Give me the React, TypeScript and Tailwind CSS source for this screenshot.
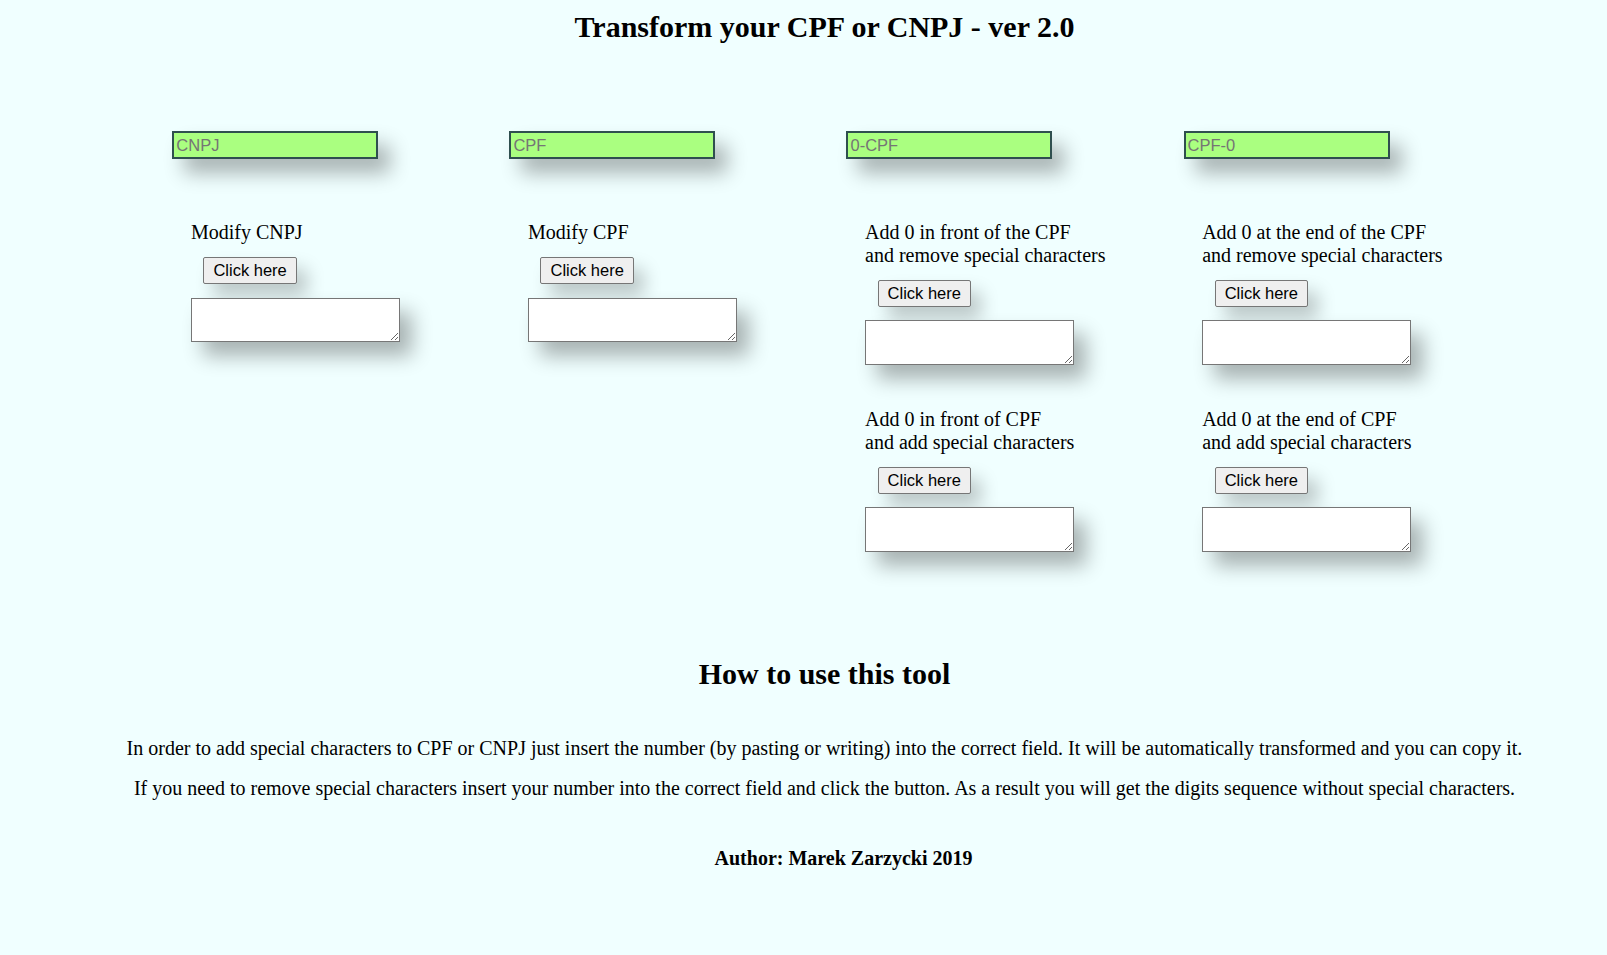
import React from "react";

const groups: { placeholder: string; blocks: string[][] }[] = [
  { placeholder: "CNPJ", blocks: [["Modify CNPJ"]] },
  { placeholder: "CPF", blocks: [["Modify CPF"]] },
  {
    placeholder: "0-CPF",
    blocks: [
      ["Add 0 in front of the CPF", "and remove special characters"],
      ["Add 0 in front of CPF", "and add special characters"],
    ],
  },
  {
    placeholder: "CPF-0",
    blocks: [
      ["Add 0 at the end of the CPF", "and remove special characters"],
      ["Add 0 at the end of CPF", "and add special characters"],
    ],
  },
];

const Block = ({ lines }: { lines: string[] }) => (
  <div className="flex flex-col items-start">
    <p className="text-[20px] leading-[22.5px] text-black">
      {lines.map((l, i) => (
        <span key={i} className="block">
          {l}
        </span>
      ))}
    </p>
    <button className="mt-[13.5px] ml-[12.5px] h-[27px] px-[9px] bg-[#efefef] border border-[#767676] rounded-[2px] font-['Liberation_Sans',sans-serif] text-[16.5px] leading-[19px] text-black shadow-[10px_12px_18px_rgba(0,0,0,0.22)]">
      Click here
    </button>
    <textarea className="mt-[13.3px] w-[209px] h-[44.7px] bg-white border border-[#767676] p-[2px] shadow-[12px_14px_20px_rgba(0,0,0,0.3)]" />
  </div>
);

export default function App() {
  return (
    <div className="min-h-screen pt-[10px] bg-[#f0ffff] font-['Liberation_Serif',serif] text-black">
      <h1 className="pl-[42px] text-center text-[30px] leading-[34px] font-bold">
        Transform your CPF or CNPJ - ver 2.0
      </h1>

      {/* converters */}
      <div className="mt-[87px] pl-[172.3px] flex">
        {groups.map((g) => (
          <div key={g.placeholder} className="w-[337.1px] flex flex-col items-start">
            <input
              placeholder={g.placeholder}
              className="w-[206px] h-[28px] bg-[#aaff80] border-2 border-[#2f4f4f] px-[2px] font-['Liberation_Sans',sans-serif] text-[16.5px] placeholder:text-[#757575] shadow-[12px_14px_20px_rgba(0,0,0,0.3)]"
            />
            <div className="mt-[62.3px] pl-[18.6px] flex flex-col gap-[43.3px]">
              {g.blocks.map((b, i) => (
                <Block key={i} lines={b} />
              ))}
            </div>
          </div>
        ))}
      </div>

      {/* how to */}
      <div className="pl-[42px] text-center">
        <h2 className="mt-[105.5px] text-[30px] leading-[34px] font-bold">How to use this tool</h2>
        <p className="mt-[45.6px] text-[20px] leading-[22.5px]">
          In order to add special characters to CPF or CNPJ just insert the number (by pasting or writing) into the correct field. It will be automatically transformed and you can copy it.
        </p>
        <p className="mt-[17.5px] text-[20px] leading-[22.5px]">
          If you need to remove special characters insert your number into the correct field and click the button. As a result you will get the digits sequence without special characters.
        </p>
      </div>
      <p className="mt-[48px] pl-[80px] text-center text-[20px] leading-[22.5px] font-bold">
        Author: Marek Zarzycki 2019
      </p>
    </div>
  );
}
